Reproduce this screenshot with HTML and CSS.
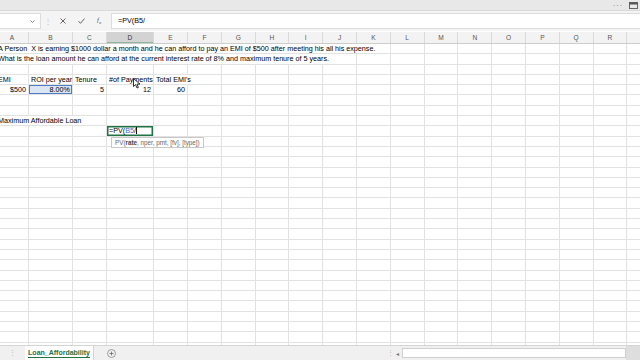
FILE: index.html
```html
<!DOCTYPE html>
<html lang="en">
<head>
    <meta charset="UTF-8">
    <title>Loan_Affordability - Excel</title>
    <link rel="stylesheet" href="styles.css">
</head>
<body>
    <!--顶部功能区边缘-->
    <div id="ribbon">
        <span class="more">···</span>
        <svg class="ribbon-icon" width="9" height="7" viewBox="0 0 9 7">
            <rect x="0.5" y="0.5" width="8" height="6" fill="none" stroke="#555" stroke-width="0.9"/>
            <rect x="0.5" y="0.5" width="8" height="2" fill="#555"/>
        </svg>
    </div>
    <!--编辑栏-->
    <div id="formulaBar">
        <div id="nameBox">
            <svg width="5" height="3" viewBox="0 0 5 3"><path d="M0.5 0.5 L2.5 2.5 L4.5 0.5" fill="none" stroke="#666" stroke-width="0.8"/></svg>
        </div>
        <div id="grip">⋮</div>
        <div id="fxButtons">
            <svg width="6" height="6" viewBox="0 0 6 6"><path d="M0.5 0.5 L5.5 5.5 M5.5 0.5 L0.5 5.5" stroke="#555" stroke-width="0.9"/></svg>
            <svg width="7" height="6" viewBox="0 0 7 6"><path d="M0.5 3.2 L2.5 5.3 L6.5 0.6" fill="none" stroke="#555" stroke-width="0.9"/></svg>
            <span class="fx">f<sub>x</sub></span>
        </div>
        <div id="formulaInput">=PV(B5/</div>
    </div>
    <!--工作表-->
    <div id="sheet">
        <div id="colHeads"></div>
        <div id="cells"></div>
        <svg id="cursor" width="8" height="11" viewBox="0 0 8 11">
            <path d="M0.5 0.5 L0.5 8.5 L2.6 6.6 L4 10 L5.4 9.4 L4 6.1 L7 6.1 Z" fill="#fff" stroke="#000" stroke-width="0.8"/>
        </svg>
    </div>
    <!--工作表标签-->
    <div id="tabBar">
        <div class="tab-nav">⋮</div>
        <div class="tab"><span>Loan_Affordability</span></div>
        <svg class="add" width="9" height="9" viewBox="0 0 9 9">
            <circle cx="4.5" cy="4.5" r="4" fill="none" stroke="#888" stroke-width="0.8"/>
            <path d="M4.5 2.5 L4.5 6.5 M2.5 4.5 L6.5 4.5" stroke="#666" stroke-width="0.8"/>
        </svg>
        <div class="spacer"></div>
        <div id="hscroll">
            <span class="grip">⋮</span>
            <span class="arrow">◂</span>
            <div class="track"></div>
            <div class="end"></div>
        </div>
    </div>
    <script src="script.js"></script>
</body>
</html>
```

FILE: styles.css
```css
*{
    margin: 0;
    padding: 0;
    box-sizing: border-box;
}
body{
    width: 640px;
    height: 360px;
    overflow: hidden;
    display: flex;
    flex-direction: column;
    font-family: "Liberation Sans", Arial, sans-serif;
    background-color: #ffffff;
    color: #000000;
}
/*功能区*/
#ribbon{
    height: 11px;
    flex: none;
    background-color: #e8e8e8;
    border-bottom: 1px solid #d9d9d9;
    display: flex;
    justify-content: flex-end;
    align-items: center;
    gap: 6px;
    padding-right: 2px;
}
#ribbon .more{
    font-size: 7px;
    color: #666;
    letter-spacing: 1px;
}
/*编辑栏*/
#formulaBar{
    height: 20px;
    flex: none;
    background-color: #f4f4f4;
    display: flex;
    align-items: center;
    padding: 2px 0;
}
#nameBox{
    width: 41px;
    height: 16px;
    background-color: #fff;
    border: 1px solid #dcdcdc;
    border-left: none;
    display: flex;
    align-items: center;
    justify-content: flex-end;
    padding-right: 5px;
}
#grip{
    width: 14px;
    text-align: center;
    color: #bdbdbd;
    font-size: 8px;
}
#fxButtons{
    width: 56px;
    height: 16px;
    display: flex;
    align-items: center;
    gap: 12px;
    padding-left: 5px;
}
#fxButtons .fx{
    font-family: "Liberation Serif", serif;
    font-style: italic;
    font-size: 7px;
    color: #555;
}
#fxButtons .fx sub{
    font-size: 5px;
}
#formulaInput{
    flex: 1;
    height: 16px;
    background-color: #fff;
    border: 1px solid #dcdcdc;
    border-right: none;
    font-size: 7.2px;
    line-height: 14px;
    padding-left: 6px;
}
/*工作表区域*/
#sheet{
    flex: 1;
    overflow: hidden;
    position: relative;
    margin-top: 1px;
}
#colHeads, #cells{
    display: grid;
    grid-template-columns: 33px 44px 34px 47px 34px repeat(14, 33.8px);
    width: 644px;
    margin-left: -4px;
    overflow: hidden;
}
#colHeads{
    height: 12px;
    background-color: #f3f3f3;
    border-bottom: 1px solid #cdcdcd;
}
.colhead{
    border-right: 1px solid #dadada;
    font-size: 6.6px;
    line-height: 11px;
    text-align: center;
    color: #555;
}
.colhead.sel{
    background-color: #d3d3d3;
    color: #333;
    box-shadow: inset 0 -1px 0 #8fb59f;
}
#cells{
    grid-auto-rows: 10.3px;
}
.cell{
    border-right: 1px solid #e2e2e2;
    border-bottom: 1px solid #e2e2e2;
    font-size: 7.2px;
    line-height: 10px;
    padding: 0 2px;
    white-space: pre;
}
.cell.num{
    text-align: right;
}
.cell.ref{
    background-color: #dbe5f3;
    box-shadow: inset 0 0 0 1px #4e7cc4;
}
.cell.editing{
    position: relative;
    box-shadow: inset 0 0 0 1.5px #217346;
}
.ref-text{
    color: #3b6cc4;
}
.caret{
    display: inline-block;
    width: 1px;
    height: 7px;
    background-color: #111;
    vertical-align: -1px;
}
.tip{
    position: absolute;
    left: 4px;
    top: 11px;
    z-index: 2;
    background-color: #fff;
    border: 1px solid #c8c8c8;
    padding: 0 3px;
    font-size: 6.3px;
    line-height: 9px;
    color: #666;
    white-space: nowrap;
}
.tip b{
    color: #444;
}
#cursor{
    position: absolute;
    left: 133px;
    top: 46px;
}
/*工作表标签栏*/
#tabBar{
    height: 15px;
    flex: none;
    background-color: #f0f0f0;
    border-top: 1px solid #d4d4d4;
    display: flex;
    align-items: stretch;
}
#tabBar .tab-nav{
    width: 25px;
    text-align: center;
    font-size: 7px;
    line-height: 14px;
    color: #b5b5b5;
}
#tabBar .tab{
    width: 68px;
    background-color: #fff;
    display: flex;
    align-items: center;
    justify-content: center;
    box-shadow: 1px 0 0 #d4d4d4;
}
#tabBar .tab span{
    font-size: 7px;
    font-weight: bold;
    color: #217346;
    border-bottom: 1px solid #217346;
    line-height: 8px;
}
#tabBar .add{
    align-self: center;
    margin-left: 14px;
}
#tabBar .spacer{
    flex: 1;
}
#hscroll{
    width: 255px;
    display: flex;
    align-items: center;
}
#hscroll .grip{
    width: 11px;
    font-size: 7px;
    color: #bbb;
    text-align: center;
}
#hscroll .arrow{
    width: 6px;
    font-size: 6px;
    color: #777;
}
#hscroll .track{
    flex: 1;
    height: 10px;
    background-color: #fff;
    border: 1px solid #d0d0d0;
}
#hscroll .end{
    width: 14px;
    align-self: stretch;
    background-color: #dedede;
}
```

FILE: script.js
```js
var cols=["A","B","C","D","E","F","G","H","I","J","K","L","M","N","O","P","Q","R","S"];
var rowCount=30;
/*单元格内容：col为列序号，span为合并显示的列数*/
var data={
    1:[{col:0,span:11,text:"A Person  X is earning $1000 dollar a month and he can afford to pay an EMI of $500 after meeting his all his expense."}],
    2:[{col:0,span:10,text:"What is the loan amount he can afford at the current interest rate of 8% and maximum tenure of 5 years."}],
    4:[{col:0,text:"EMI"},{col:1,text:"ROI per year"},{col:2,text:"Tenure"},{col:3,text:"#of Payments"},{col:4,span:2,text:"Total EMI's"}],
    5:[{col:0,text:"$500",cls:"num"},{col:1,text:"8.00%",cls:"num ref"},{col:2,text:"5",cls:"num"},{col:3,text:"12",cls:"num"},{col:4,text:"60",cls:"num"}],
    8:[{col:0,span:3,text:"Maximum Affordable Loan"}],
    9:[{col:3,cls:"editing",html:'=PV(<span class="ref-text">B5</span>/<span class="caret"></span><div class="tip">PV(<b>rate</b>, nper, pmt, [fv], [type])</div>'}]
};

var colHeads=document.getElementById("colHeads");
for(var i=0;i<cols.length;i++)
{
    var head=document.createElement("div");
    head.className="colhead"+(cols[i]==="D"?" sel":"");
    head.textContent=cols[i];
    colHeads.appendChild(head);
}

var cells=document.getElementById("cells");
for(var r=1;r<=rowCount;r++)
{
    var rowData=data[r]||[];
    var c=0;
    while(c<cols.length)
    {
        var item=null;
        for(var k=0;k<rowData.length;k++)
        {
            if(rowData[k].col===c) item=rowData[k];
        }
        var cell=document.createElement("div");
        cell.className="cell";
        var span=1;
        if(item)
        {
            span=item.span||1;
            if(item.cls) cell.className+=" "+item.cls;
            if(item.html) cell.innerHTML=item.html;
            else cell.textContent=item.text;
            if(span>1) cell.style.gridColumn="span "+span;
        }
        cells.appendChild(cell);
        c+=span;
    }
}
```
